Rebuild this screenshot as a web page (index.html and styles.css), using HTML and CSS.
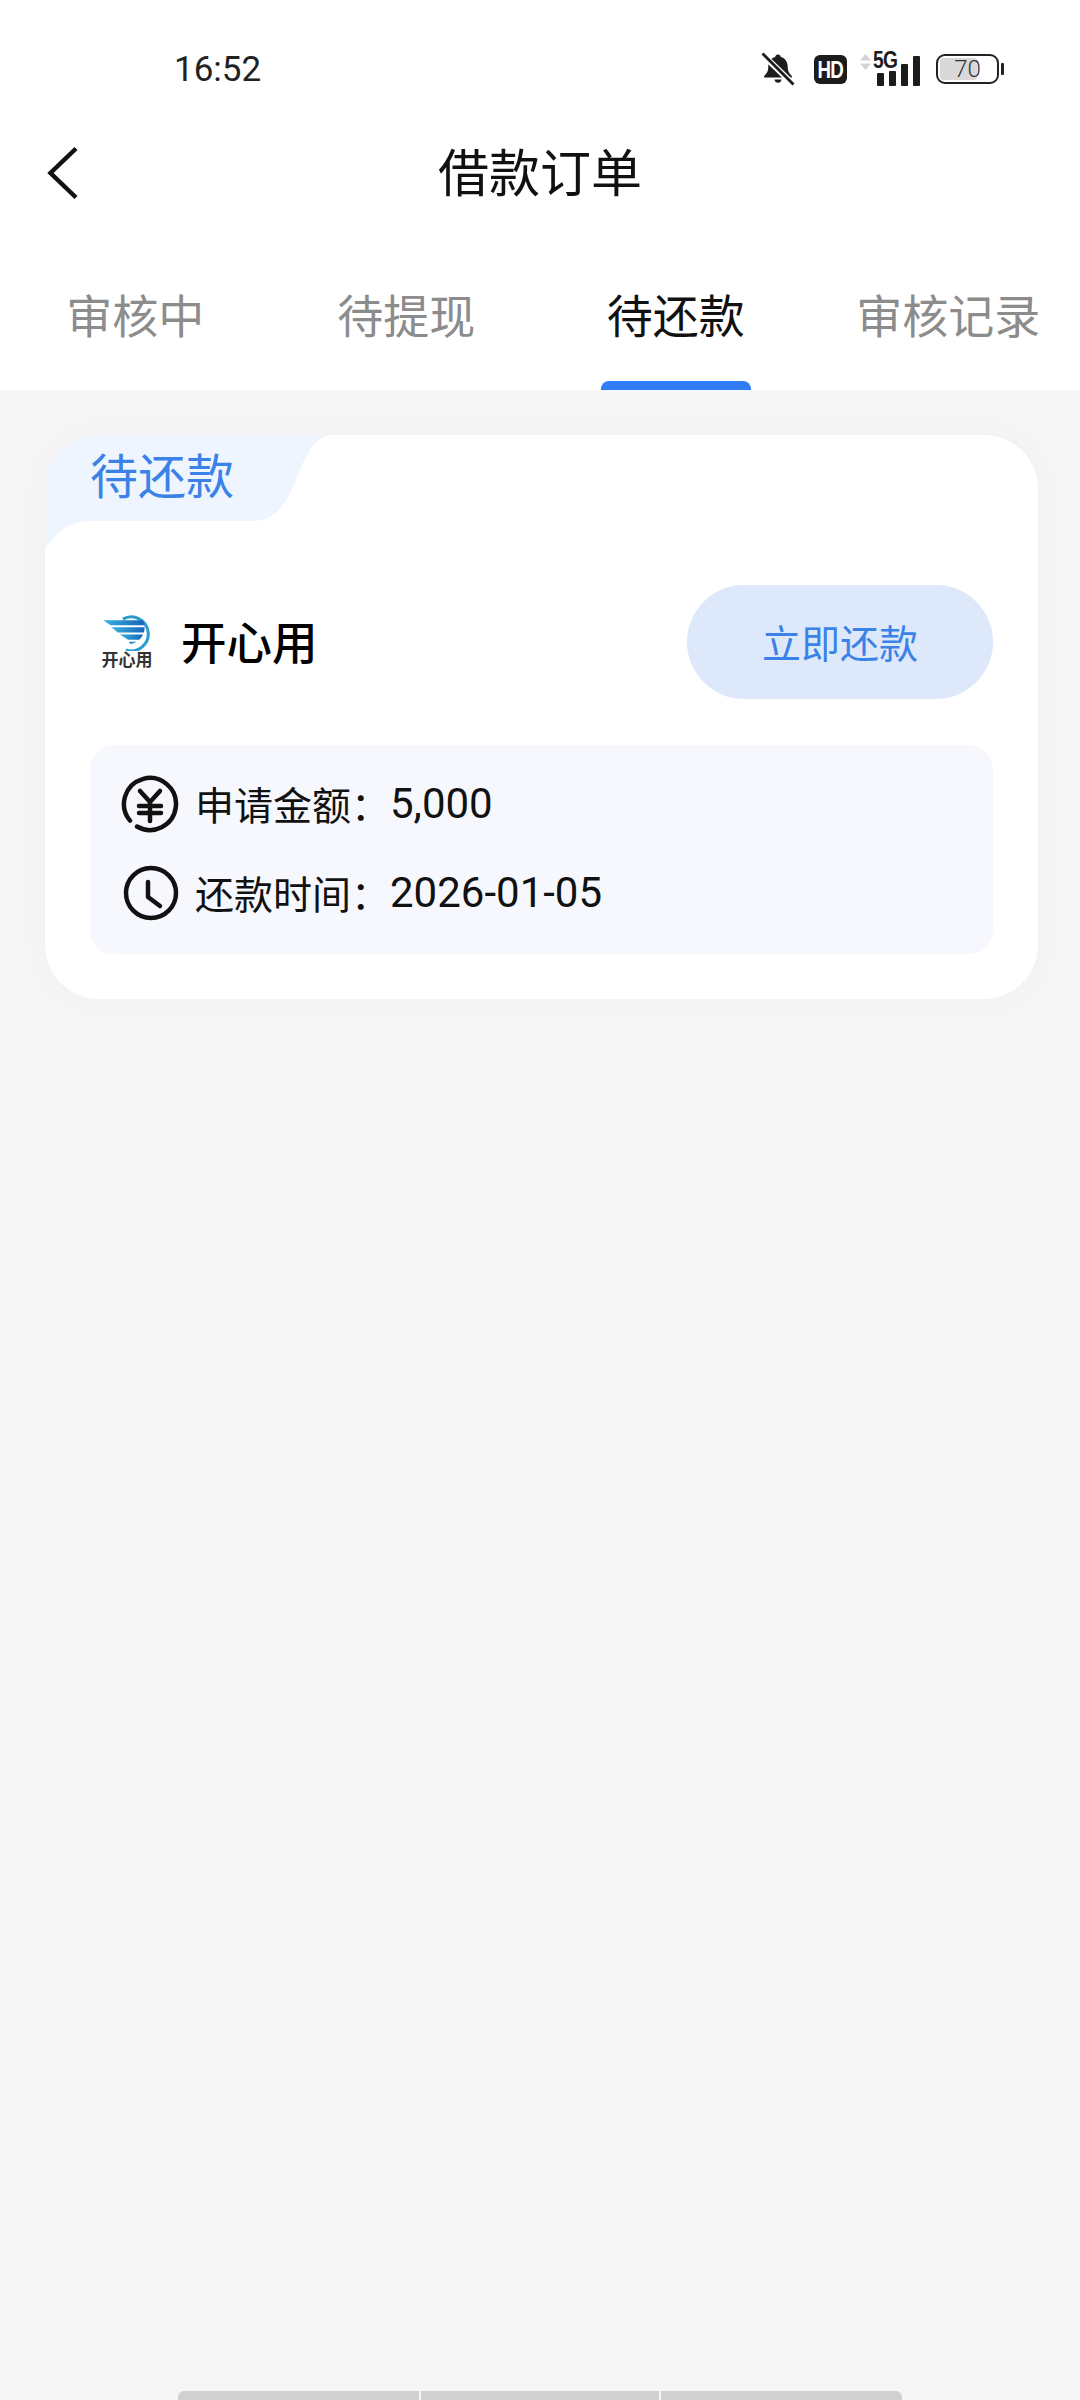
FILE: index.html
```html
<!DOCTYPE html>
<html lang="zh-CN">
<head>
    <meta charset="UTF-8">
    <meta name="viewport" content="width=device-width, initial-scale=1.0">
    <title>借款订单</title>
    <link rel="stylesheet" href="styles.css">
</head>
<body>
    <div class="topArea">
        <!-- 状态栏 -->
        <div class="statusBar">
            <span class="time">16:52</span>
            <div class="statusIcons">
                <svg class="iconBell" width="34" height="34" viewBox="0 0 34 34">
                    <path d="M17 2.500c1.600 0 2.600 1 2.800 2.400 4.400 1.200 6.900 4.900 6.900 9.600 0 3.600.8 6.200 3 8.200 1 .9 1.300 1.600 1.300 2.800H3c0-1.200.3-1.900 1.300-2.800 2.200-2 3-4.600 3-8.200 0-4.700 2.500-8.400 6.900-9.600.2-1.400 1.200-2.400 2.800-2.400z" fill="#1c1c1c"/>
                    <path d="M13.500 27.500h7c-.2 2-1.600 3.300-3.500 3.300s-3.300-1.300-3.500-3.300z" fill="#1c1c1c"/>
                    <path d="M1.500 2.500l31 30" stroke="#fff" stroke-width="6"/>
                    <path d="M1.500 1.500l31 31" stroke="#1c1c1c" stroke-width="2.800"/>
                </svg>
                <span class="hdBadge"><span class="hdText">HD</span></span>
                <div class="signal">
                    <svg class="signalArrows" width="11" height="16" viewBox="0 0 11 16">
                        <path d="M5.500 0l5.500 6.500H0zM0 9.500h11L5.500 16z" fill="#d4d4d4"/>
                    </svg>
                    <span class="fiveG">5G</span>
                    <span class="bar bar1"></span>
                    <span class="bar bar2"></span>
                    <span class="bar bar3"></span>
                    <span class="bar bar4"></span>
                </div>
                <div class="battery">
                    <div class="batteryBody">
                        <div class="batteryFill"></div>
                        <span class="batteryText">70</span>
                    </div>
                    <span class="batteryNub"></span>
                </div>
            </div>
        </div>

        <!-- 标题栏 -->
        <div class="navBar">
            <svg class="backIcon" width="32" height="54" viewBox="0 0 32 54">
                <path d="M29 2.500L3.500 27 29 51.500" fill="none" stroke="#111" stroke-width="4.500"/>
            </svg>
            <h1>借款订单</h1>
        </div>

        <!-- 标签 -->
        <div class="tabs">
            <div class="tab"><span class="tabLabel">审核中</span></div>
            <div class="tab"><span class="tabLabel">待提现</span></div>
            <div class="tab active"><span class="tabLabel">待还款</span><span class="tabLine"></span></div>
            <div class="tab"><span class="tabLabel">审核记录</span></div>
        </div>
    </div>

    <div class="card">
        <div class="cardTag">
            <svg class="tagShape" width="290" height="114" viewBox="0 0 290 114">
                <path d="M0 0H284C268 4 262 20 255 34C248 52 238 86 208 86H45C25 86 10 98 0 114Z" fill="#eff5fe"/>
            </svg>
            <span class="tagText">待还款</span>
        </div>

        <div class="productRow">
            <div class="productInfo">
                <div class="logo">
                    <svg width="50" height="37" viewBox="0 0 48 36">
                        <defs>
                            <linearGradient id="wing" x1="0" y1="0" x2="1" y2="0">
                                <stop offset="0" stop-color="#3ab0e2"/>
                                <stop offset="1" stop-color="#1565b8"/>
                            </linearGradient>
                        </defs>
                        <path d="M20 5a16.500 16.500 0 1 1 3 30" fill="none" stroke="#2b9ccf" stroke-width="3"/>
                        <path d="M1 6H39c1.500 2 2 3.500 2 5H8z" fill="url(#wing)"/>
                        <path d="M9 13H41c.2 2-.1 3.500-.5 5H15z" fill="url(#wing)"/>
                        <path d="M17 20H39.500c-.8 2-2 3.500-3.500 5H25z" fill="url(#wing)"/>
                        <path d="M26 27H33c-2 1.500-4 2-6 2z" fill="#1f86c6"/>
                    </svg>
                    <span class="logoText">开心用</span>
                </div>
                <span class="productName">开心用</span>
            </div>
            <button class="repayBtn">立即还款</button>
        </div>

        <div class="infoBox">
            <div class="infoRow">
                <svg width="60" height="60" viewBox="0 0 60 60">
                    <path d="M10 46.600A26 26 0 1 1 17 52.500" fill="none" stroke="#111" stroke-width="4.500" stroke-linecap="round"/>
                    <path d="M20 17L30 28L40 17M19 32H41M19 39H41M30 28V47" fill="none" stroke="#111" stroke-width="4.500" stroke-linecap="round" stroke-linejoin="round"/>
                </svg>
                <span class="infoLabel">申请金额：</span>
                <span class="infoValue">5,000</span>
            </div>
            <div class="infoRow">
                <svg width="60" height="60" viewBox="0 0 60 60">
                    <circle cx="31" cy="30" r="25" fill="none" stroke="#111" stroke-width="4.500"/>
                    <path d="M28 19V34L40 43" fill="none" stroke="#111" stroke-width="4.500" stroke-linecap="round" stroke-linejoin="round"/>
                </svg>
                <span class="infoLabel">还款时间：</span>
                <span class="infoValue">2026-01-05</span>
            </div>
        </div>
    </div>

    <!-- 底部手势条 -->
    <div class="gestureBar">
        <span></span>
        <span></span>
        <span></span>
    </div>
</body>
</html>
```

FILE: styles.css
```css
body {
    font-family: Roboto, "Noto Sans CJK SC", sans-serif;
    margin: 0;
    padding: 0;
    width: 1080px;
    height: 2400px;
    background: #f6f6f6;
    display: flex;
    flex-direction: column;
    overflow: hidden;
    color: #111;
}

.topArea {
    background: #fff;
}

/* 状态栏 */
.statusBar {
    height: 120px;
    padding: 18px 76px 0 174px;
    box-sizing: border-box;
    display: flex;
    justify-content: space-between;
    align-items: center;
}

.time {
    font-size: 35px;
    color: #222;
}

.statusIcons {
    display: flex;
    align-items: center;
}

.iconBell {
    margin-right: 19px;
}

.hdBadge {
    width: 33px;
    height: 29px;
    background: #1c1c1c;
    color: #fff;
    border-radius: 6px;
    display: flex;
    align-items: center;
    justify-content: center;
    margin-right: 13px;
}

.hdText {
    font-family: "Liberation Sans", sans-serif;
    font-size: 24px;
    font-weight: bold;
    line-height: 29px;
    letter-spacing: -1px;
    transform: scaleX(0.78);
}

.signal {
    position: relative;
    width: 60px;
    height: 34px;
    display: flex;
    align-items: flex-end;
    justify-content: flex-end;
    gap: 5px;
    margin-right: 16px;
}

.signalArrows {
    position: absolute;
    left: 0;
    top: 2px;
}

.fiveG {
    position: absolute;
    left: 13px;
    top: -4px;
    font-family: "Liberation Sans", sans-serif;
    font-size: 24px;
    font-weight: bold;
    line-height: 24px;
    letter-spacing: -1px;
    color: #1c1c1c;
    transform: scaleX(0.8);
    transform-origin: left;
}

.bar {
    width: 7px;
    background: #1c1c1c;
    border-radius: 1px;
}

.bar1 {
    height: 13px;
}

.bar2 {
    height: 15px;
}

.bar3 {
    height: 22px;
}

.bar4 {
    height: 30px;
}

.battery {
    display: flex;
    align-items: center;
    gap: 2px;
}

.batteryBody {
    position: relative;
    width: 63px;
    height: 30px;
    box-sizing: border-box;
    border: 2.500px solid #222;
    border-radius: 9px;
    display: flex;
    align-items: center;
    justify-content: center;
}

.batteryFill {
    position: absolute;
    left: 2px;
    top: 2px;
    bottom: 2px;
    width: 37px;
    background: #d8d8d8;
    border-radius: 3px;
}

.batteryText {
    position: relative;
    font-size: 24px;
    font-weight: 300;
    color: #333;
}

.batteryNub {
    width: 3px;
    height: 12px;
    background: #222;
    border-radius: 1px;
}

/* 标题栏 */
.navBar {
    position: relative;
    height: 106px;
    display: flex;
    align-items: center;
    justify-content: center;
}

.navBar h1 {
    margin: 0;
    padding-top: 3px;
    font-size: 51px;
    font-weight: 400;
    line-height: 60px;
}

.backIcon {
    position: absolute;
    left: 47px;
    top: 26px;
}

/* 标签 */
.tabs {
    display: flex;
    height: 164px;
    padding-left: 2px;
}

.tab {
    width: 270px;
    display: flex;
    flex-direction: column;
    align-items: center;
    padding-top: 61px;
    box-sizing: border-box;
    font-size: 46px;
    color: #8c8c8c;
}

.tab:first-child {
    padding-right: 3px;
}

.tab:last-child {
    padding-left: 6px;
}

.tab.active {
    color: #111;
}

.tabLabel {
    line-height: 60px;
    white-space: nowrap;
}

.tabLine {
    width: 150px;
    height: 9px;
    margin-top: 34px;
    background: #2f7df6;
    border-radius: 8px 8px 0 0;
}

/* 卡片 */
.card {
    width: 993px;
    margin: 45px 0 0 45px;
    padding-bottom: 45px;
    background: #fff;
    border-radius: 54px;
    box-shadow: 0 0 36px rgba(0, 0, 0, 0.03);
    overflow: hidden;
}

.cardTag {
    position: relative;
    height: 86px;
    padding-left: 45px;
    display: flex;
    align-items: center;
}

.tagShape {
    position: absolute;
    left: 0;
    top: 0;
}

.tagText {
    position: relative;
    font-size: 48px;
    line-height: 60px;
    color: #3b82e8;
}

.productRow {
    display: flex;
    justify-content: space-between;
    align-items: center;
    margin-top: 64px;
    padding: 0 45px;
}

.productInfo {
    display: flex;
    align-items: center;
    gap: 24px;
    padding-left: 7px;
}

.logo {
    width: 60px;
    display: flex;
    flex-direction: column;
    align-items: center;
}

.logoText {
    font-size: 17px;
    font-weight: 700;
    line-height: 19px;
    color: #333;
    white-space: nowrap;
}

.productName {
    font-size: 45.500px;
    font-weight: 500;
    padding-bottom: 5px;
    color: #000;
}

.repayBtn {
    width: 306px;
    height: 114px;
    padding: 0 0 3px;
    border: none;
    border-radius: 57px;
    background: #dde9fb;
    color: #3b82e8;
    font-family: inherit;
    font-size: 39px;
}

.infoBox {
    display: flex;
    flex-direction: column;
    gap: 29px;
    margin: 46px 45px 0;
    padding: 29px 30px 31px;
    background: #f6f8fd;
    border-radius: 24px;
}

.infoRow {
    display: flex;
    align-items: center;
    height: 60px;
    font-size: 39px;
    color: #111;
}

.infoLabel {
    margin-left: 15px;
    padding-bottom: 2px;
    white-space: nowrap;
}

.infoValue {
    font-size: 42px;
    padding-bottom: 2px;
    white-space: nowrap;
}

/* 底部手势条 */
.gestureBar {
    margin: auto 0 0 178px;
    width: 724px;
    height: 9px;
    display: flex;
    gap: 2px;
}

.gestureBar span {
    flex: 1;
    background: #d0d0d0;
}

.gestureBar span:first-child {
    flex: 0 0 241px;
    border-radius: 6px 0 0 0;
}

.gestureBar span:last-child {
    flex: 0 0 241px;
    border-radius: 0 6px 0 0;
}
```
